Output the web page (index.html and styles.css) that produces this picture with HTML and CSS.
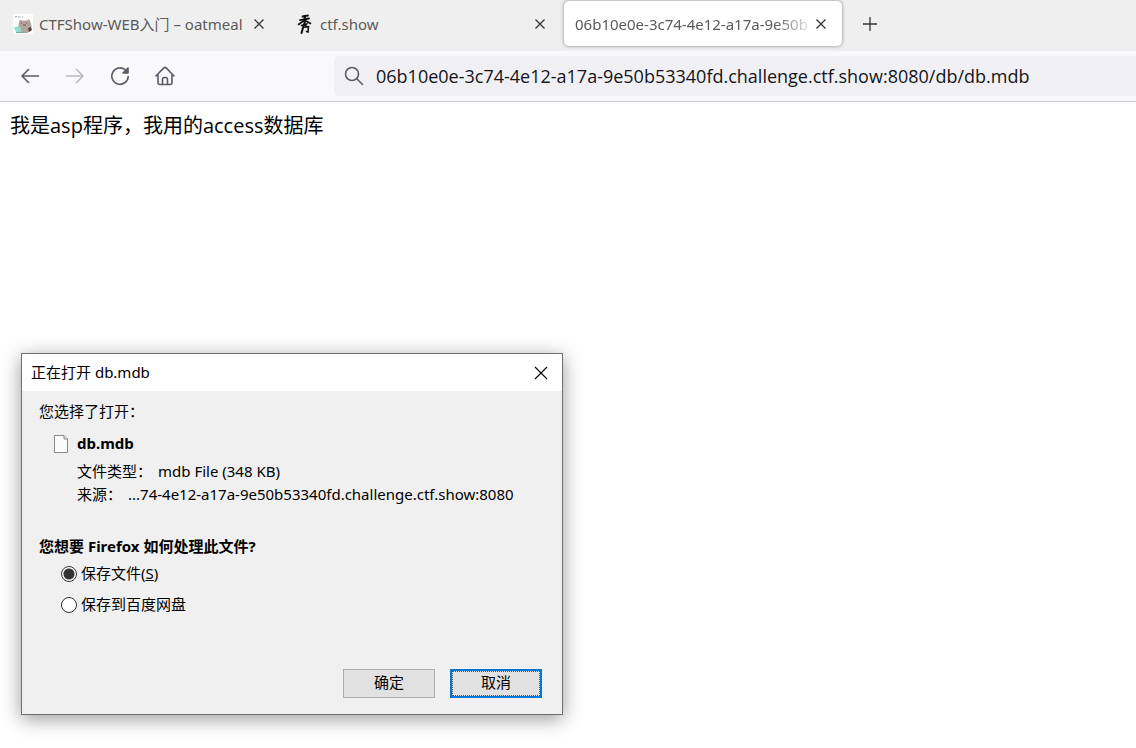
FILE: index.html
```html
<!DOCTYPE html>
<html lang="zh-CN">
<head>
  <meta charset="UTF-8" />
  <meta name="viewport" content="width=device-width, initial-scale=1.0"/>
  <title>db.mdb</title>
  <link rel="stylesheet" href="styles.css">
</head>
<body>

  <nav class="tabs">
    <div class="tab">
      <svg class="favicon" viewBox="0 0 20 20">
        <rect width="20" height="20" fill="#fdfdfc"/>
        <path d="M2 3l2-.5M5 3h1M7 2.500v1M9 3h1" stroke="#999" stroke-width="1"/>
        <path d="M6 8l1-2.500 2 1h5l2-1.500 1.500 3 1 4-1 5-3 2H7l-2-5z" fill="#b3a59b"/>
        <path d="M8 9h1M13 9h1M10 11h3" stroke="#65564f"/>
        <path d="M15 14l3-1 1 3-3 2z" fill="#55423d"/>
        <path d="M1 13l6-.5 1.500 5L3 18.500z" fill="#8fdcd3"/>
        <path d="M3 18.500h9" stroke="#77aaa5"/>
      </svg>
      <span class="tab-title">CTFShow-WEB入门 – oatmeal</span>
      <button class="tab-close" aria-label="关闭标签页"><svg viewBox="0 0 12 12"><path d="M1.500 1.500l9 9M10.500 1.500l-9 9"/></svg></button>
    </div>
    <div class="tab">
      <svg class="favicon" viewBox="0 0 20 20" fill="none" stroke="#111" stroke-linecap="round">
        <path d="M8.500 2.500l5.500-1" stroke-width="1.800"/>
        <path d="M6 6.200l9-1.700" stroke-width="1.800"/>
        <path d="M10.800 2l-.3 8" stroke-width="2.200"/>
        <path d="M10 6.500l-5.500 4M11 6.500l5.500 3" stroke-width="1.600"/>
        <path d="M7.500 11.500l5-1.500-1.500 3 3.500-.3-.5 5.300-1.500-.5" stroke-width="1.600"/>
        <path d="M9.500 12l-2 7" stroke-width="2"/>
      </svg>
      <span class="tab-title">ctf.show</span>
      <button class="tab-close" aria-label="关闭标签页"><svg viewBox="0 0 12 12"><path d="M1.500 1.500l9 9M10.500 1.500l-9 9"/></svg></button>
    </div>
    <div class="tab active">
      <span class="tab-title">06b10e0e-3c74-4e12-a17a-9e50b</span>
      <button class="tab-close" aria-label="关闭标签页"><svg viewBox="0 0 12 12"><path d="M1.500 1.500l9 9M10.500 1.500l-9 9"/></svg></button>
    </div>
    <button class="tab-new" aria-label="新建标签页"><svg viewBox="0 0 16 16"><path d="M8 1v14M1 8h14"/></svg></button>
  </nav>

  <header class="toolbar">
    <button class="nav-btn" aria-label="后退"><svg viewBox="0 0 20 20"><path d="M18.500 10H2M8.500 3.500L2 10l6.500 6.500"/></svg></button>
    <button class="nav-btn" aria-label="前进" disabled><svg viewBox="0 0 20 20"><path d="M1.500 10H18M11.500 3.500L18 10l-6.500 6.500"/></svg></button>
    <button class="nav-btn" aria-label="刷新"><svg viewBox="0 0 20 20"><path d="M15.500 4A8.200 8.200 0 1 0 18.200 10.500"/><path class="solid" d="M18 2v5h-5z"/></svg></button>
    <button class="nav-btn" aria-label="主页"><svg viewBox="0 0 20 20"><path d="M1 10L8.800 1.900q1.200-1 2.400 0L19 10M3 8.500v8q0 2 2 2h10q2 0 2-2v-8M7.500 18v-4.500q0-2 2-2h1q2 0 2 2V18"/></svg></button>
    <div class="urlbar">
      <svg viewBox="0 0 20 20"><circle cx="8" cy="8" r="6.500"/><path d="M12.800 12.800l5.700 5.700"/></svg>
      <input type="text" aria-label="地址" value="06b10e0e-3c74-4e12-a17a-9e50b53340fd.challenge.ctf.show:8080/db/db.mdb" />
    </div>
  </header>

  <main class="page">我是asp程序，我用的access数据库</main>

  <form class="dialog" role="dialog" aria-labelledby="dialogTitle">
    <div class="dialog-header">
      <span id="dialogTitle">正在打开 db.mdb</span>
      <button type="button" class="dialog-close" aria-label="关闭"><svg viewBox="0 0 14 14"><path d="M1 1l12 12M13 1L1 13"/></svg></button>
    </div>
    <div class="dialog-body">
      <p>您选择了打开：</p>
      <div class="file">
        <svg class="file-icon" viewBox="0 0 16 20"><path d="M1.500 1.500h9.500l3.500 3.500v13.500h-13z" fill="#fafcfb" stroke="#888"/><path d="M11 1.500v3.500h3.500" fill="#ddd" stroke="#888"/></svg>
        <div class="file-info">
          <strong>db.mdb</strong>
          <div class="row"><span>文件类型：</span><span>mdb File (348 KB)</span></div>
          <div class="row"><span>来源：</span><span>...74-4e12-a17a-9e50b53340fd.challenge.ctf.show:8080</span></div>
        </div>
      </div>
      <fieldset>
        <legend>您想要 Firefox 如何处理此文件?</legend>
        <div class="option">
          <input type="radio" name="action" id="save" checked />
          <label for="save">保存文件(<u>S</u>)</label>
        </div>
        <div class="option">
          <input type="radio" name="action" id="baidu" />
          <label for="baidu">保存到百度网盘</label>
        </div>
      </fieldset>
      <div class="buttons">
        <button type="button" class="btn">确定</button>
        <button type="button" class="btn default">取消</button>
      </div>
    </div>
  </form>

</body>
</html>
```
FILE: styles.css
```css
* {
  box-sizing: border-box;
}

body {
  margin: 0;
  background: #fff;
  color: #000;
  font-family: "Noto Sans", "Noto Sans CJK SC", sans-serif;
  font-size: 15px;
}

button, input {
  font: inherit;
  color: inherit;
}

button {
  padding: 0;
  border: none;
  background: none;
}

svg {
  display: block;
  flex: none;
}

/* tabs */
.tabs {
  display: flex;
  gap: 3px;
  height: 51px;
  padding: 1px 2px 5px;
  background: #efefef;
  color: #5b5b5b;
}

.tab {
  display: flex;
  align-items: center;
  width: 278px;
  padding: 0 15px 0 11px;
  border-radius: 5px;
}

.tab.active {
  background: #fff;
  box-shadow: 0 0 3px 1px #b0b0b8;
}

.favicon {
  width: 20px;
  height: 20px;
  margin-right: 6px;
}

.tab-title {
  flex: 1;
  white-space: nowrap;
}

.tab.active .tab-title {
  mask-image: linear-gradient(to left, transparent, #000 40px);
}

.tab-close svg {
  width: 12px;
  height: 12px;
}

.tab-close path, .tab-new path {
  stroke: #333;
  stroke-width: 1.3;
}

.tab-new {
  width: 50px;
}

.tab-new svg {
  width: 16px;
  height: 16px;
  margin: 0 auto;
}

/* toolbar */
.toolbar {
  display: flex;
  align-items: center;
  height: 51px;
  padding-left: 20px;
  background: #f9f9fb;
  border-bottom: 1px solid #c8c8cc;
}

.nav-btn {
  width: 20px;
  margin-right: 25px;
}

.nav-btn:disabled {
  opacity: 0.4;
}

.nav-btn svg, .urlbar svg {
  width: 20px;
  height: 20px;
  fill: none;
  stroke: #5b5b66;
  stroke-width: 1.6;
  stroke-linecap: round;
  stroke-linejoin: round;
}

.nav-btn .solid {
  fill: #5b5b66;
}

.urlbar {
  flex: 1;
  display: flex;
  align-items: center;
  gap: 12px;
  height: 40px;
  margin-left: 134px;
  padding-left: 10px;
  background: #f0f0f4;
  border-radius: 5px 0 0 5px;
}

.urlbar input {
  flex: 1;
  min-width: 0;
  padding: 0;
  border: none;
  outline: none;
  background: none;
  color: #15141a;
  font-family: "Open Sans", "Noto Sans CJK SC", sans-serif;
  font-size: 18px;
}

.page {
  padding: 10px;
  font-family: "Open Sans", "Noto Sans CJK SC", sans-serif;
  font-size: 20px;
  line-height: 28px;
}

/* dialog */
.dialog {
  position: absolute;
  left: 21px;
  top: 353px;
  width: 542px;
  background: #f0f0f0;
  border: 1px solid #6e6e6e;
  box-shadow: 0 4px 18px rgba(0,0,0,0.4);
  line-height: 23px;
}

.dialog-header {
  display: flex;
  align-items: center;
  justify-content: space-between;
  height: 37px;
  padding: 0 14px 0 9px;
  background: #fff;
}

.dialog-close svg {
  width: 14px;
  height: 14px;
}

.dialog-close path {
  stroke: #000;
  stroke-width: 1.1;
}

.dialog-body {
  padding: 9px 20px 16px 17px;
}

.dialog p {
  margin: 0 0 9px;
}

.file {
  display: flex;
  gap: 8px;
  padding-left: 14px;
}

.file-icon {
  width: 16px;
  height: 20px;
  margin-top: 2px;
}

.file-info strong {
  display: block;
  margin-bottom: 5px;
}

.row {
  display: flex;
  gap: 6px;
}

fieldset {
  margin: 29px 0 0;
  padding: 0;
  border: none;
}

legend {
  padding: 0;
  font-weight: bold;
}

.option {
  display: flex;
  align-items: center;
  gap: 4px;
  margin: 4px 0 8px;
  padding-left: 22px;
}

.option input {
  appearance: none;
  width: 16px;
  height: 16px;
  margin: 0;
  border: 1px solid #333;
  border-radius: 50%;
  background: #fff;
}

.option input:checked {
  background: radial-gradient(#333 5px, #fff 6px);
}

.buttons {
  display: flex;
  justify-content: flex-end;
  gap: 15px;
  margin-top: 45px;
}

.btn {
  width: 92px;
  height: 29px;
  padding-bottom: 2px;
  background: #e1e1e1;
  border: 1px solid #adadad;
}

.btn.default {
  border: 2px solid #0078d7;
  outline: 1px dotted #555;
  outline-offset: -3px;
}
```
